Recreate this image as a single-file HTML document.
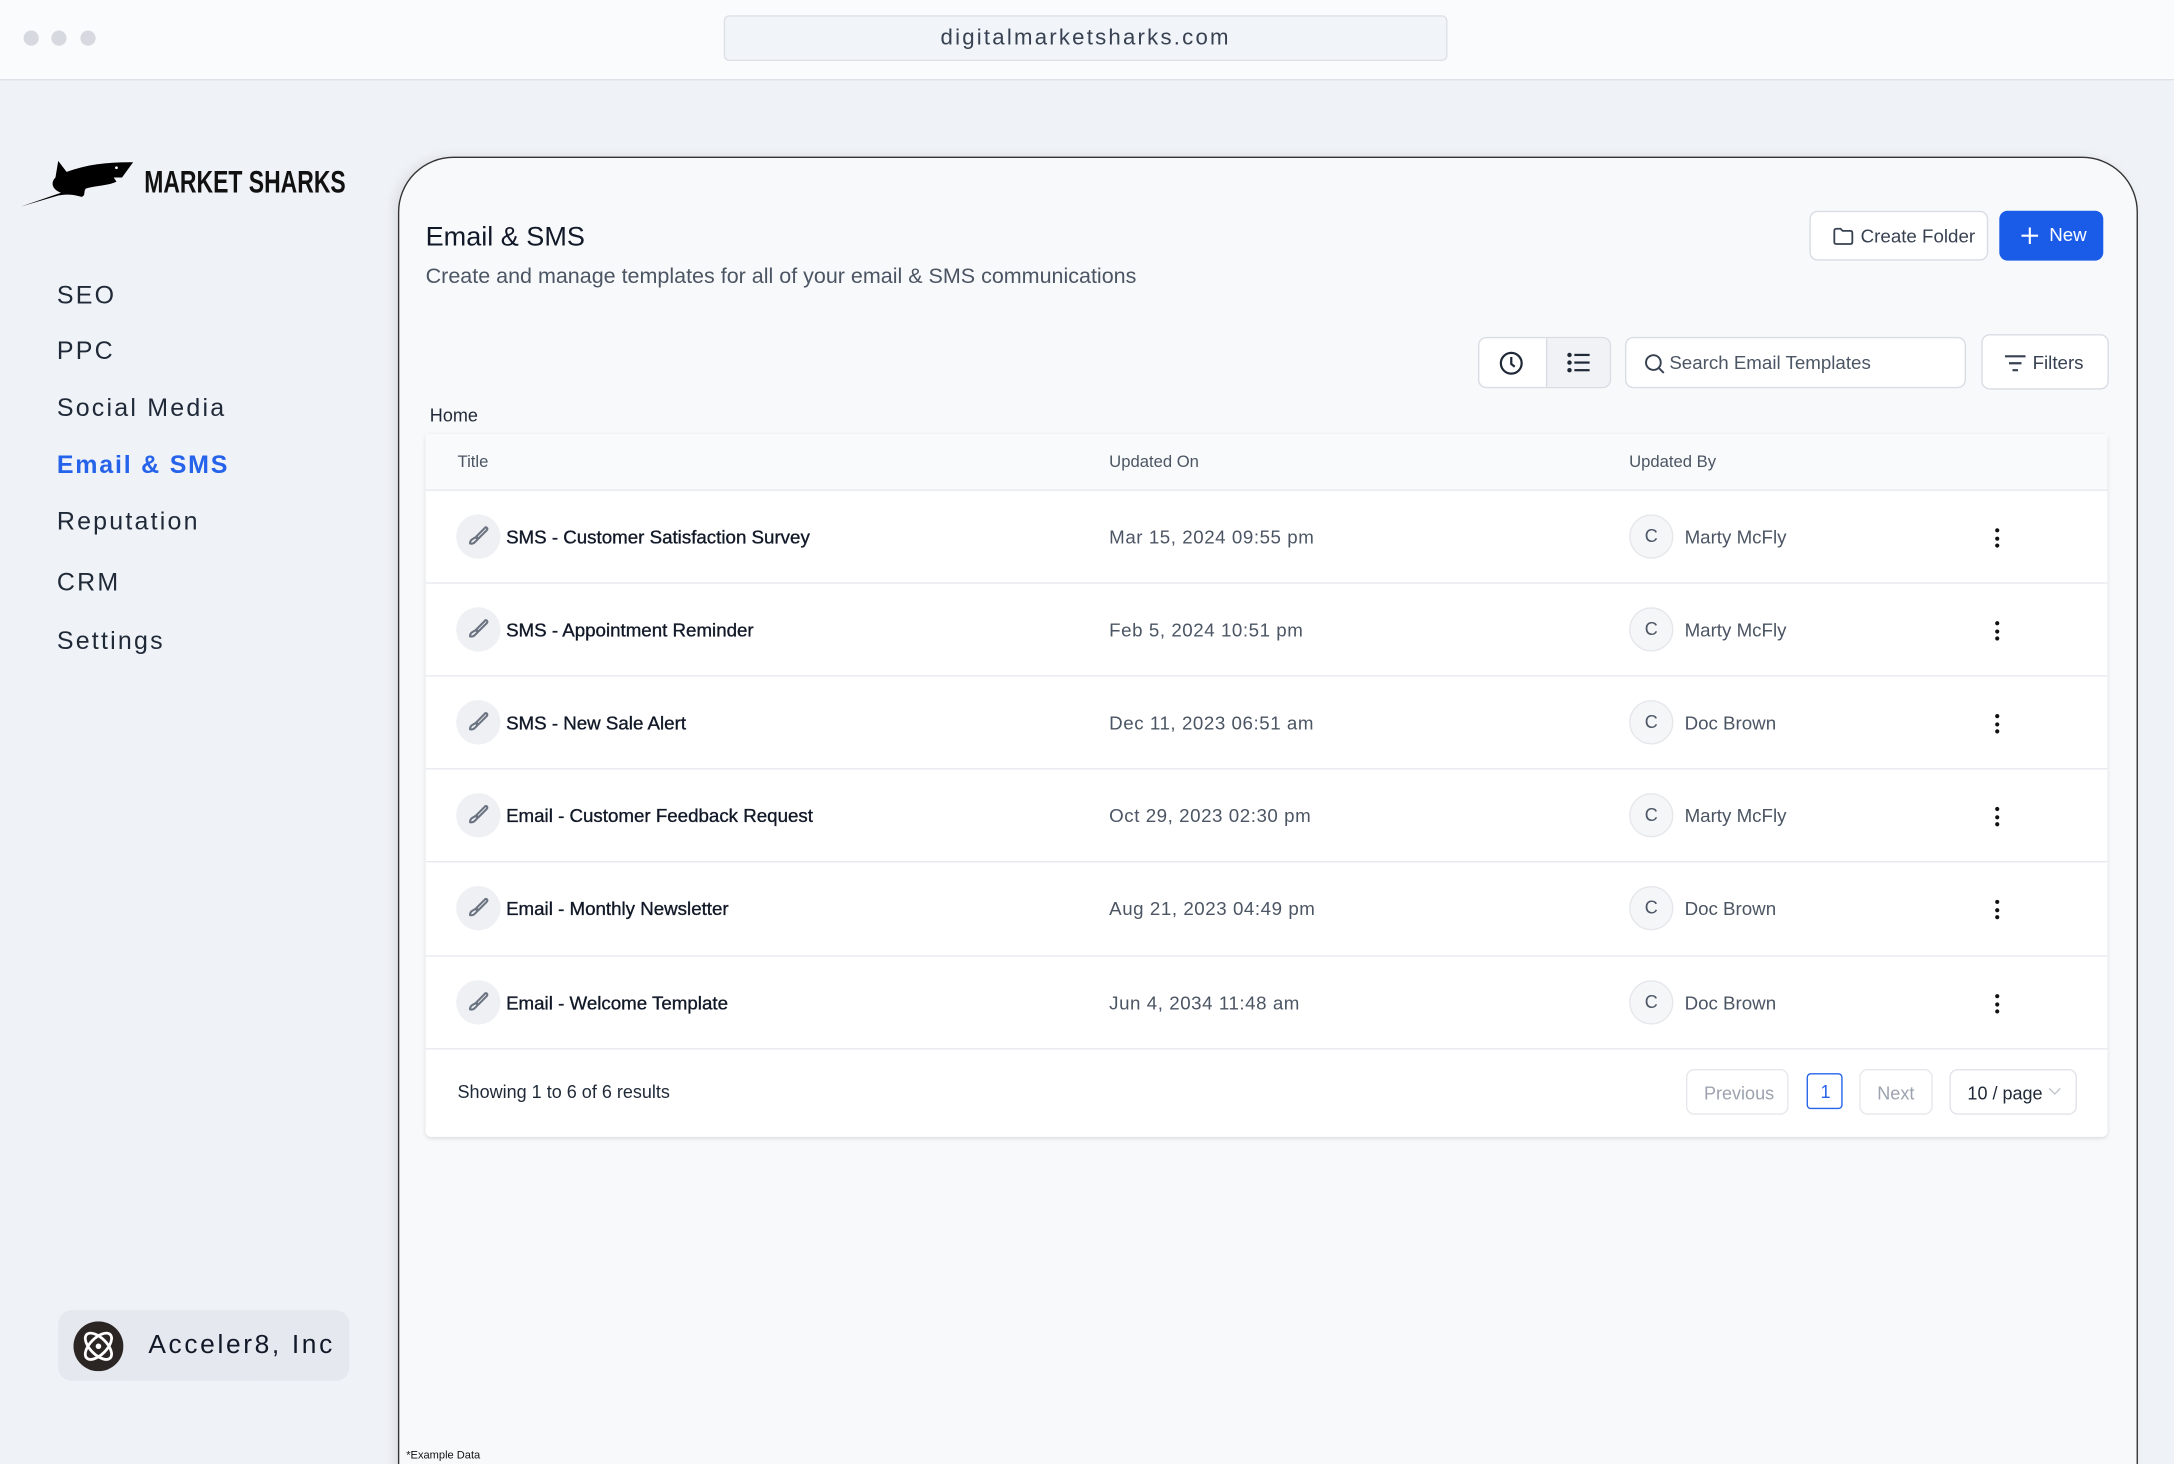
<!DOCTYPE html>
<html><head><meta charset="utf-8"><style>
html,body{margin:0;padding:0;width:2174px;height:1464px;overflow:hidden;background:#eff2f7;font-family:"Liberation Sans",sans-serif}
#s{position:absolute;left:0;top:0;width:1568px;height:1056px;transform:scale(1.38648);transform-origin:0 0;overflow:hidden}
.a{position:absolute}
.nav{position:absolute;left:41px;font-size:18px;letter-spacing:1.6px;color:#1f2937}
.btn{position:absolute;background:#fff;border:1px solid #d9dce3;border-radius:6px;box-sizing:border-box}
.row{position:absolute;left:0;width:1213px;height:67px;border-top:1px solid #e7e9ee}
.ic{position:absolute;left:22px;top:17px;width:32px;height:32px;border-radius:50%;background:#eff0f4}
.ic svg{position:absolute;left:7px;top:7px}
.t{position:absolute;left:58px;top:26px;font-size:13.5px;color:#111827;-webkit-text-stroke:.25px #111827}
.d{position:absolute;left:493px;top:26px;font-size:13.5px;color:#4b5563;letter-spacing:.4px}
.av{position:absolute;left:868px;top:17px;width:30px;height:30px;border-radius:50%;border:1px solid #e5e7eb;background:#f5f6f8;font-size:13px;color:#4b5563;text-align:center;line-height:30px}
.n{position:absolute;left:908px;top:26px;font-size:13.5px;color:#4b5563}
.k{position:absolute;left:1132px;top:27px;width:3px}
.k i{display:block;width:3px;height:3px;border-radius:50%;background:#111;margin-bottom:2.5px}
</style></head><body><div id="s">
<div class="a" style="left:0;top:0;width:1568px;height:57px;background:#fafbfc;border-bottom:1px solid #dde1e7"></div>
<div class="a" style="left:17px;top:22px;width:11px;height:11px;border-radius:50%;background:#d6d9df"></div>
<div class="a" style="left:37px;top:22px;width:11px;height:11px;border-radius:50%;background:#d6d9df"></div>
<div class="a" style="left:58px;top:22px;width:11px;height:11px;border-radius:50%;background:#d6d9df"></div>
<div class="a" style="left:522px;top:11px;width:522px;height:33px;background:#f1f4f8;border:1px solid #dde1e7;border-radius:4px;box-sizing:border-box;text-align:center;line-height:31px;font-size:16px;letter-spacing:1.6px;color:#374151">digitalmarketsharks.com</div>

<svg class="a" style="left:14px;top:112px" width="84" height="40" viewBox="0 0 84 40"><path d="M1 37 L30 27 C24 25 22 20 26 16 L28 4 L34 12 C50 6 66 5 82 5 L74 16 L68 16 L70 19 C64 22 54 22 48 24 C46 26 48 29 45 30 C38 28 34 28 28 29 Z" fill="#000"/><circle cx="70" cy="9" r="1" fill="#fff"/></svg>
<div class="a" style="left:104px;top:118px;font-size:23px;font-weight:bold;color:#111;transform:scaleX(.72);transform-origin:0 0;font-family:'Liberation Sans Narrow','Liberation Sans',sans-serif">MARKET SHARKS</div>

<div class="nav" style="top:203px">SEO</div>
<div class="nav" style="top:243px">PPC</div>
<div class="nav" style="top:284px">Social Media</div>
<div class="nav" style="top:325px;color:#2563eb;font-weight:bold;letter-spacing:1.3px">Email &amp; SMS</div>
<div class="nav" style="top:366px">Reputation</div>
<div class="nav" style="top:410px">CRM</div>
<div class="nav" style="top:452px">Settings</div>

<div class="a" style="left:42px;top:945px;width:210px;height:51px;background:#e5e8ee;border-radius:10px"></div>
<svg class="a" style="left:53px;top:953px" width="36" height="36" viewBox="0 0 36 36"><circle cx="18" cy="18" r="18" fill="#2b2623"/><g fill="none" stroke="#fff" stroke-width="2"><ellipse cx="18" cy="18" rx="12" ry="6" transform="rotate(45 18 18)"/><ellipse cx="18" cy="18" rx="12" ry="6" transform="rotate(-45 18 18)"/></g><circle cx="18" cy="18" r="2" fill="#fff"/></svg>
<div class="a" style="left:107px;top:960px;font-size:19px;letter-spacing:1.9px;color:#111827">Acceler8, Inc</div>

<div class="a" style="left:287px;top:113px;width:1255px;height:1000px;background:#f8f9fb;border:1.5px solid #333;border-radius:40px;box-sizing:border-box;box-shadow:-3px 0 8px rgba(0,0,0,.08)"></div>
<div class="a" style="left:307px;top:160px;font-size:19.5px;color:#111827">Email &amp; SMS</div>
<div class="a" style="left:307px;top:191px;font-size:15.5px;color:#4b5563">Create and manage templates for all of your email &amp; SMS communications</div>

<div class="btn" style="left:1305px;top:152px;width:129px;height:36px"><svg class="a" style="left:16px;top:11px" width="15" height="13" viewBox="0 0 15 13"><path d="M1 2.5 Q1 1 2.5 1 H5.5 L7 2.5 H12.5 Q14 2.5 14 4 V10.5 Q14 12 12.5 12 H2.5 Q1 12 1 10.5 Z" fill="none" stroke="#374151" stroke-width="1.3"/></svg><span class="a" style="left:36px;top:10px;font-size:13.5px;color:#374151">Create Folder</span></div>
<div class="a" style="left:1442px;top:152px;width:75px;height:36px;background:#1a5ce8;border-radius:6px"><svg class="a" style="left:16px;top:12px" width="12" height="12" viewBox="0 0 12 12"><path d="M6 0V12M0 6H12" stroke="#fff" stroke-width="1.5"/></svg><span class="a" style="left:36px;top:10px;font-size:13.5px;color:#fff">New</span></div>

<div class="btn" style="left:1066px;top:243px;width:96px;height:37px;overflow:hidden"><div class="a" style="left:48px;top:0;width:48px;height:37px;background:#f0f2f6;border-left:1px solid #d9dce3"></div>
<svg class="a" style="left:14px;top:9px" width="18" height="18" viewBox="0 0 18 18"><circle cx="9" cy="9" r="7.5" fill="none" stroke="#1f2937" stroke-width="1.6"/><path d="M9 4.5V9.5L11.5 11.5" fill="none" stroke="#1f2937" stroke-width="1.6"/></svg>
<svg class="a" style="left:63px;top:10px" width="17" height="15" viewBox="0 0 17 15"><g fill="#1f2937"><circle cx="2" cy="2" r="1.6"/><circle cx="2" cy="7.5" r="1.6"/><circle cx="2" cy="13" r="1.6"/><rect x="5.5" y="1.2" width="11" height="1.6"/><rect x="5.5" y="6.7" width="11" height="1.6"/><rect x="5.5" y="12.2" width="11" height="1.6"/></g></svg></div>
<div class="btn" style="left:1172px;top:243px;width:246px;height:37px"><svg class="a" style="left:13px;top:11px" width="15" height="15" viewBox="0 0 15 15"><circle cx="6.5" cy="6.5" r="5.3" fill="none" stroke="#374151" stroke-width="1.4"/><path d="M10.5 10.5 L14 14" stroke="#374151" stroke-width="1.4"/></svg><span class="a" style="left:31px;top:10px;font-size:13.5px;color:#4b5563">Search Email Templates</span></div>
<div class="btn" style="left:1429px;top:241px;width:92px;height:40px"><svg class="a" style="left:16px;top:14px" width="15" height="12" viewBox="0 0 15 12"><path d="M0 1H15M3 6H12M5.5 11H9.5" stroke="#374151" stroke-width="1.6"/></svg><span class="a" style="left:36px;top:12px;font-size:13.5px;color:#374151">Filters</span></div>

<div class="a" style="left:310px;top:292px;font-size:13px;color:#1f2937">Home</div>

<div class="a" style="left:307px;top:313px;width:1213px;height:507px;background:#fff;border-radius:4px;box-shadow:0 1px 3px rgba(0,0,0,.12)">
<div class="a" style="left:0;top:0;width:1213px;height:40px;background:#f9fafb"></div>
<div class="a" style="left:23px;top:13px;font-size:12px;color:#4b5563">Title</div>
<div class="a" style="left:493px;top:13px;font-size:12px;color:#4b5563">Updated On</div>
<div class="a" style="left:868px;top:13px;font-size:12px;color:#4b5563">Updated By</div>

<div class="row" style="top:40px"><div class="ic"><svg width="18" height="18" viewBox="0 0 18 18"><path d="M15 2.5 Q16 3.5 15 4.5 L9 10.5 L7.5 9 L13.5 3 Q14 2 15 2.5Z M7 9.5 L8.5 11 L6.5 13 Q5 14.5 3 14 Q3 12 4.5 11 Z" fill="none" stroke="#6b7280" stroke-width="1.5" stroke-linejoin="round"/></svg></div><div class="t">SMS - Customer Satisfaction Survey</div><div class="d">Mar 15, 2024 09:55 pm</div><div class="av">C</div><div class="n">Marty McFly</div><div class="k"><i></i><i></i><i></i></div></div>
<div class="row" style="top:107px"><div class="ic"><svg width="18" height="18" viewBox="0 0 18 18"><path d="M15 2.5 Q16 3.5 15 4.5 L9 10.5 L7.5 9 L13.5 3 Q14 2 15 2.5Z M7 9.5 L8.5 11 L6.5 13 Q5 14.5 3 14 Q3 12 4.5 11 Z" fill="none" stroke="#6b7280" stroke-width="1.5" stroke-linejoin="round"/></svg></div><div class="t">SMS - Appointment Reminder</div><div class="d">Feb 5, 2024 10:51 pm</div><div class="av">C</div><div class="n">Marty McFly</div><div class="k"><i></i><i></i><i></i></div></div>
<div class="row" style="top:174px"><div class="ic"><svg width="18" height="18" viewBox="0 0 18 18"><path d="M15 2.5 Q16 3.5 15 4.5 L9 10.5 L7.5 9 L13.5 3 Q14 2 15 2.5Z M7 9.5 L8.5 11 L6.5 13 Q5 14.5 3 14 Q3 12 4.5 11 Z" fill="none" stroke="#6b7280" stroke-width="1.5" stroke-linejoin="round"/></svg></div><div class="t">SMS - New Sale Alert</div><div class="d">Dec 11, 2023 06:51 am</div><div class="av">C</div><div class="n">Doc Brown</div><div class="k"><i></i><i></i><i></i></div></div>
<div class="row" style="top:241px"><div class="ic"><svg width="18" height="18" viewBox="0 0 18 18"><path d="M15 2.5 Q16 3.5 15 4.5 L9 10.5 L7.5 9 L13.5 3 Q14 2 15 2.5Z M7 9.5 L8.5 11 L6.5 13 Q5 14.5 3 14 Q3 12 4.5 11 Z" fill="none" stroke="#6b7280" stroke-width="1.5" stroke-linejoin="round"/></svg></div><div class="t">Email - Customer Feedback Request</div><div class="d">Oct 29, 2023 02:30 pm</div><div class="av">C</div><div class="n">Marty McFly</div><div class="k"><i></i><i></i><i></i></div></div>
<div class="row" style="top:308px;height:68px"><div class="ic"><svg width="18" height="18" viewBox="0 0 18 18"><path d="M15 2.5 Q16 3.5 15 4.5 L9 10.5 L7.5 9 L13.5 3 Q14 2 15 2.5Z M7 9.5 L8.5 11 L6.5 13 Q5 14.5 3 14 Q3 12 4.5 11 Z" fill="none" stroke="#6b7280" stroke-width="1.5" stroke-linejoin="round"/></svg></div><div class="t">Email - Monthly Newsletter</div><div class="d">Aug 21, 2023 04:49 pm</div><div class="av">C</div><div class="n">Doc Brown</div><div class="k"><i></i><i></i><i></i></div></div>
<div class="row" style="top:376px"><div class="ic"><svg width="18" height="18" viewBox="0 0 18 18"><path d="M15 2.5 Q16 3.5 15 4.5 L9 10.5 L7.5 9 L13.5 3 Q14 2 15 2.5Z M7 9.5 L8.5 11 L6.5 13 Q5 14.5 3 14 Q3 12 4.5 11 Z" fill="none" stroke="#6b7280" stroke-width="1.5" stroke-linejoin="round"/></svg></div><div class="t">Email - Welcome Template</div><div class="d">Jun 4, 2034 11:48 am</div><div class="av">C</div><div class="n">Doc Brown</div><div class="k"><i></i><i></i><i></i></div></div>
<div class="row" style="top:443px;height:64px"><div class="a" style="left:23px;top:23px;font-size:13px;color:#1f2937">Showing 1 to 6 of 6 results</div>
<div class="btn" style="left:909px;top:14px;width:74px;height:33px;border-color:#e5e7eb"><span class="a" style="left:12px;top:9px;font-size:13px;color:#9ca3af">Previous</span></div>
<div class="btn" style="left:996px;top:17px;width:26px;height:26px;border-color:#2563eb;border-radius:3px"><span class="a" style="left:9px;top:5px;font-size:13px;color:#2563eb">1</span></div>
<div class="btn" style="left:1034px;top:14px;width:53px;height:33px;border-color:#e5e7eb"><span class="a" style="left:12px;top:9px;font-size:13px;color:#9ca3af">Next</span></div>
<div class="btn" style="left:1099px;top:14px;width:92px;height:33px;border-color:#e1e3e8"><span class="a" style="left:12px;top:9px;font-size:13px;color:#1f2937">10 / page</span><svg class="a" style="left:70px;top:12px" width="10" height="6" viewBox="0 0 10 6"><path d="M1 1L5 5L9 1" fill="none" stroke="#c0c4cc" stroke-width="1"/></svg></div>
</div>
</div>
<div class="a" style="left:293px;top:1045px;font-size:8px;color:#111">*Example Data</div>
</div>
</body></html>
